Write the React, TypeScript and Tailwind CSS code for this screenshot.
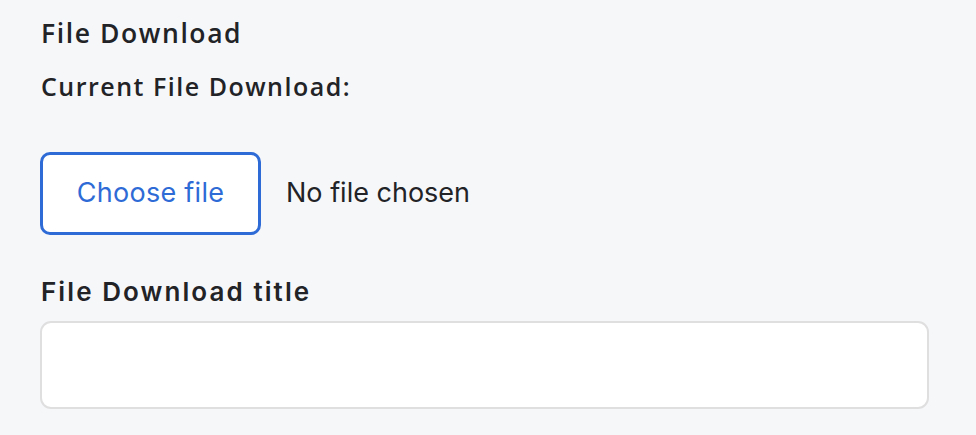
import React from "react";

export default function App() {
  return (
    <div className="w-[976px] h-[435px] bg-[#f6f7f9] overflow-hidden pl-[40px] pr-[47px] pt-[15px] font-['Inter',sans-serif]">
      <div className="pl-[1px] font-['Open_Sans','Noto_Sans',sans-serif] text-[26.5px] leading-[36px] font-semibold tracking-[0.06em] text-[#222326]">
        File Download
      </div>
      <div className="mt-[18px] pl-[1px] font-['Open_Sans','Noto_Sans',sans-serif] text-[25px] leading-[35px] font-semibold tracking-[0.06em] text-[#222326]">
        Current File Download:
      </div>
      <div className="mt-[48px] flex items-center gap-[25px]">
        <button className="w-[221px] h-[83px] rounded-[10px] border-[3px] border-[#2f6bd6] bg-white text-[#2f6bd6] text-[27px] tracking-[0.01em]">
          Choose file
        </button>
        <span className="text-[27px] text-[#222326]">No file chosen</span>
      </div>
      <div className="mt-[39px] pl-[1px] text-[26px] leading-[35px] font-semibold tracking-[0.08em] text-[#222326]">
        File Download title
      </div>
      <div className="mt-[12px] h-[88px] rounded-[11px] border-2 border-[#dfdfe0] bg-white" />
    </div>
  );
}
